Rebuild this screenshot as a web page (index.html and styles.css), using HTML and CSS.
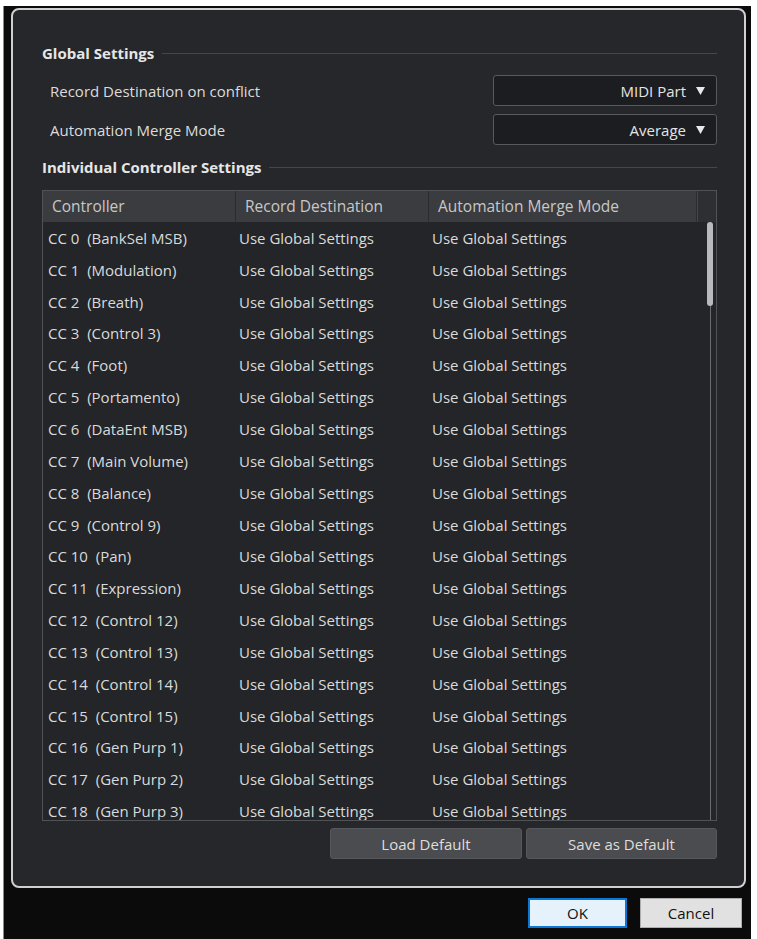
FILE: index.html
```html
<!DOCTYPE html>
<html lang="en">
  <head>
    <meta charset="UTF-8" />
    <title>MIDI Controller Settings</title>
    <link rel="stylesheet" href="styles.css">
  </head>
  <body>
    <div class="dialog-window">
      <div class="dialog-panel">
        <div class="section-title"><span>Global Settings</span></div>

        <div class="setting-row">
          <span class="setting-label">Record Destination on conflict</span>
          <div class="dropdown">
            <span>MIDI Part</span>
            <svg class="dropdown-arrow" width="9" height="8" viewBox="0 0 9 8"><polygon points="0,0 9,0 4.5,8" /></svg>
          </div>
        </div>
        <div class="setting-row setting-row--second">
          <span class="setting-label">Automation Merge Mode</span>
          <div class="dropdown">
            <span>Average</span>
            <svg class="dropdown-arrow" width="9" height="8" viewBox="0 0 9 8"><polygon points="0,0 9,0 4.5,8" /></svg>
          </div>
        </div>

        <div class="section-title section-title--table"><span>Individual Controller Settings</span></div>

        <div class="ctrl-table">
          <div class="ctrl-head">
            <div class="ctrl-head-cell">Controller</div>
            <div class="ctrl-head-cell">Record Destination</div>
            <div class="ctrl-head-cell">Automation Merge Mode</div>
            <div class="ctrl-head-corner"></div>
          </div>
          <div class="ctrl-body">
            <div class="ctrl-rows">
              <div class="ctrl-row"><div class="ctrl-cell">CC 0  (BankSel MSB)</div><div class="ctrl-cell">Use Global Settings</div><div class="ctrl-cell">Use Global Settings</div></div>
              <div class="ctrl-row"><div class="ctrl-cell">CC 1  (Modulation)</div><div class="ctrl-cell">Use Global Settings</div><div class="ctrl-cell">Use Global Settings</div></div>
              <div class="ctrl-row"><div class="ctrl-cell">CC 2  (Breath)</div><div class="ctrl-cell">Use Global Settings</div><div class="ctrl-cell">Use Global Settings</div></div>
              <div class="ctrl-row"><div class="ctrl-cell">CC 3  (Control 3)</div><div class="ctrl-cell">Use Global Settings</div><div class="ctrl-cell">Use Global Settings</div></div>
              <div class="ctrl-row"><div class="ctrl-cell">CC 4  (Foot)</div><div class="ctrl-cell">Use Global Settings</div><div class="ctrl-cell">Use Global Settings</div></div>
              <div class="ctrl-row"><div class="ctrl-cell">CC 5  (Portamento)</div><div class="ctrl-cell">Use Global Settings</div><div class="ctrl-cell">Use Global Settings</div></div>
              <div class="ctrl-row"><div class="ctrl-cell">CC 6  (DataEnt MSB)</div><div class="ctrl-cell">Use Global Settings</div><div class="ctrl-cell">Use Global Settings</div></div>
              <div class="ctrl-row"><div class="ctrl-cell">CC 7  (Main Volume)</div><div class="ctrl-cell">Use Global Settings</div><div class="ctrl-cell">Use Global Settings</div></div>
              <div class="ctrl-row"><div class="ctrl-cell">CC 8  (Balance)</div><div class="ctrl-cell">Use Global Settings</div><div class="ctrl-cell">Use Global Settings</div></div>
              <div class="ctrl-row"><div class="ctrl-cell">CC 9  (Control 9)</div><div class="ctrl-cell">Use Global Settings</div><div class="ctrl-cell">Use Global Settings</div></div>
              <div class="ctrl-row"><div class="ctrl-cell">CC 10  (Pan)</div><div class="ctrl-cell">Use Global Settings</div><div class="ctrl-cell">Use Global Settings</div></div>
              <div class="ctrl-row"><div class="ctrl-cell">CC 11  (Expression)</div><div class="ctrl-cell">Use Global Settings</div><div class="ctrl-cell">Use Global Settings</div></div>
              <div class="ctrl-row"><div class="ctrl-cell">CC 12  (Control 12)</div><div class="ctrl-cell">Use Global Settings</div><div class="ctrl-cell">Use Global Settings</div></div>
              <div class="ctrl-row"><div class="ctrl-cell">CC 13  (Control 13)</div><div class="ctrl-cell">Use Global Settings</div><div class="ctrl-cell">Use Global Settings</div></div>
              <div class="ctrl-row"><div class="ctrl-cell">CC 14  (Control 14)</div><div class="ctrl-cell">Use Global Settings</div><div class="ctrl-cell">Use Global Settings</div></div>
              <div class="ctrl-row"><div class="ctrl-cell">CC 15  (Control 15)</div><div class="ctrl-cell">Use Global Settings</div><div class="ctrl-cell">Use Global Settings</div></div>
              <div class="ctrl-row"><div class="ctrl-cell">CC 16  (Gen Purp 1)</div><div class="ctrl-cell">Use Global Settings</div><div class="ctrl-cell">Use Global Settings</div></div>
              <div class="ctrl-row"><div class="ctrl-cell">CC 17  (Gen Purp 2)</div><div class="ctrl-cell">Use Global Settings</div><div class="ctrl-cell">Use Global Settings</div></div>
              <div class="ctrl-row"><div class="ctrl-cell">CC 18  (Gen Purp 3)</div><div class="ctrl-cell">Use Global Settings</div><div class="ctrl-cell">Use Global Settings</div></div>
            </div>
            <div class="scroll-track">
              <div class="scroll-thumb"></div>
              <div class="scroll-line"></div>
            </div>
          </div>
        </div>

        <div class="table-buttons">
          <button type="button" class="panel-button panel-button--load">Load Default</button>
          <button type="button" class="panel-button panel-button--save">Save as Default</button>
        </div>
      </div>

      <div class="dialog-buttons">
        <button type="button" class="dialog-button dialog-button--ok">OK</button>
        <button type="button" class="dialog-button dialog-button--cancel">Cancel</button>
      </div>
    </div>
  </body>
</html>
```

FILE: styles.css
```css
/* Page */
body {
  margin: 0;
  background: #fff;
  font-family: "Open Sans", "Noto Sans", sans-serif;
  font-size: 15px;
  overflow: hidden;
}

/* Black outer window */
.dialog-window {
  margin: 6px 6px 0 3px;
  height: 933px;
  padding: 2px 5px 0 7px;
  background: #0b0b0c;
  border-left: 1px solid #8a8a8a;
  box-sizing: border-box;
}

/* Dark settings panel */
.dialog-panel {
  height: 880px;
  box-sizing: border-box;
  border: 2px solid #cfd0d1;
  border-radius: 8px;
  background: #25272a;
  padding: 33px 27px 0 29px;
  color: #dcdcdc;
}

/* Section headings with a rule */
.section-title {
  display: flex;
  align-items: center;
  gap: 8px;
  line-height: 20px;
  font-weight: bold;
  color: #e6e6e6;
}

.section-title::after {
  content: "";
  flex: 1;
  height: 1px;
  background: #45474a;
}

.section-title--table {
  margin-top: 12px;
}

/* Global setting rows */
.setting-row {
  display: flex;
  justify-content: space-between;
  align-items: center;
  padding-left: 8px;
  margin-top: 12px;
}

.setting-row--second {
  margin-top: 8px;
}

.setting-label {
  color: #dcdcdc;
}

.dropdown {
  width: 224px;
  height: 31px;
  box-sizing: border-box;
  display: flex;
  justify-content: flex-end;
  align-items: center;
  gap: 10px;
  padding-right: 11px;
  background: #1c1d20;
  border: 1px solid #57595c;
  border-radius: 3px;
  color: #e4e4e4;
}

.dropdown-arrow {
  fill: #e8e8e8;
}

/* Controller table */
.ctrl-table {
  margin-top: 13px;
  height: 631px;
  box-sizing: border-box;
  border: 1px solid #505255;
  display: flex;
  flex-direction: column;
}

.ctrl-head {
  display: grid;
  grid-template-columns: 193px 193px 268px 1fr;
  height: 31px;
  background: #3a3c3f;
  color: #c8c8c8;
  font-size: 15.5px;
}

.ctrl-head-cell {
  padding-left: 9px;
  line-height: 31px;
  border-right: 1px solid #2a2c2f;
}

.ctrl-head-corner {
  background: #2d2f32;
  border-left: 1px solid #44464a;
}

.ctrl-body {
  flex: 1;
  display: flex;
  overflow: hidden;
  background: #232528;
}

.ctrl-rows {
  width: 654px;
}

.ctrl-row {
  display: grid;
  grid-template-columns: 193px 193px 268px;
  height: 31.85px;
  align-items: center;
}

.ctrl-cell {
  padding-left: 3px;
  white-space: pre;
  color: #dadada;
}

.ctrl-row .ctrl-cell:first-child {
  padding-left: 5px;
}

/* Scrollbar */
.scroll-track {
  flex: 1;
  display: flex;
  flex-direction: column;
  align-items: flex-end;
  padding-right: 3px;
}

.scroll-thumb {
  width: 6px;
  height: 84px;
  border-radius: 3px;
  background: #b9babc;
}

.scroll-line {
  flex: 1;
  width: 1px;
  margin-right: 2px;
  background: #6a6c6f;
}

/* Load / Save buttons */
.table-buttons {
  display: flex;
  justify-content: flex-end;
  gap: 4px;
  margin-top: 7px;
}

.panel-button {
  height: 31px;
  font-family: inherit;
  font-size: 15px;
  color: #dedede;
  background: #4a4c4f;
  border: 1px solid #56585b;
  border-radius: 3px;
}

.panel-button--load {
  width: 192px;
}

.panel-button--save {
  width: 191px;
}

/* OK / Cancel */
.dialog-buttons {
  display: flex;
  justify-content: flex-end;
  gap: 13px;
  margin-top: 10px;
  padding-right: 4px;
}

.dialog-button {
  height: 30px;
  font-family: inherit;
  font-size: 15px;
  color: #111;
  border-radius: 0;
}

.dialog-button--ok {
  width: 99px;
  background: #e5f1fb;
  border: 2px solid #0a78d4;
}

.dialog-button--cancel {
  width: 102px;
  background: #e1e1e1;
  border: 1px solid #adadad;
}
```
